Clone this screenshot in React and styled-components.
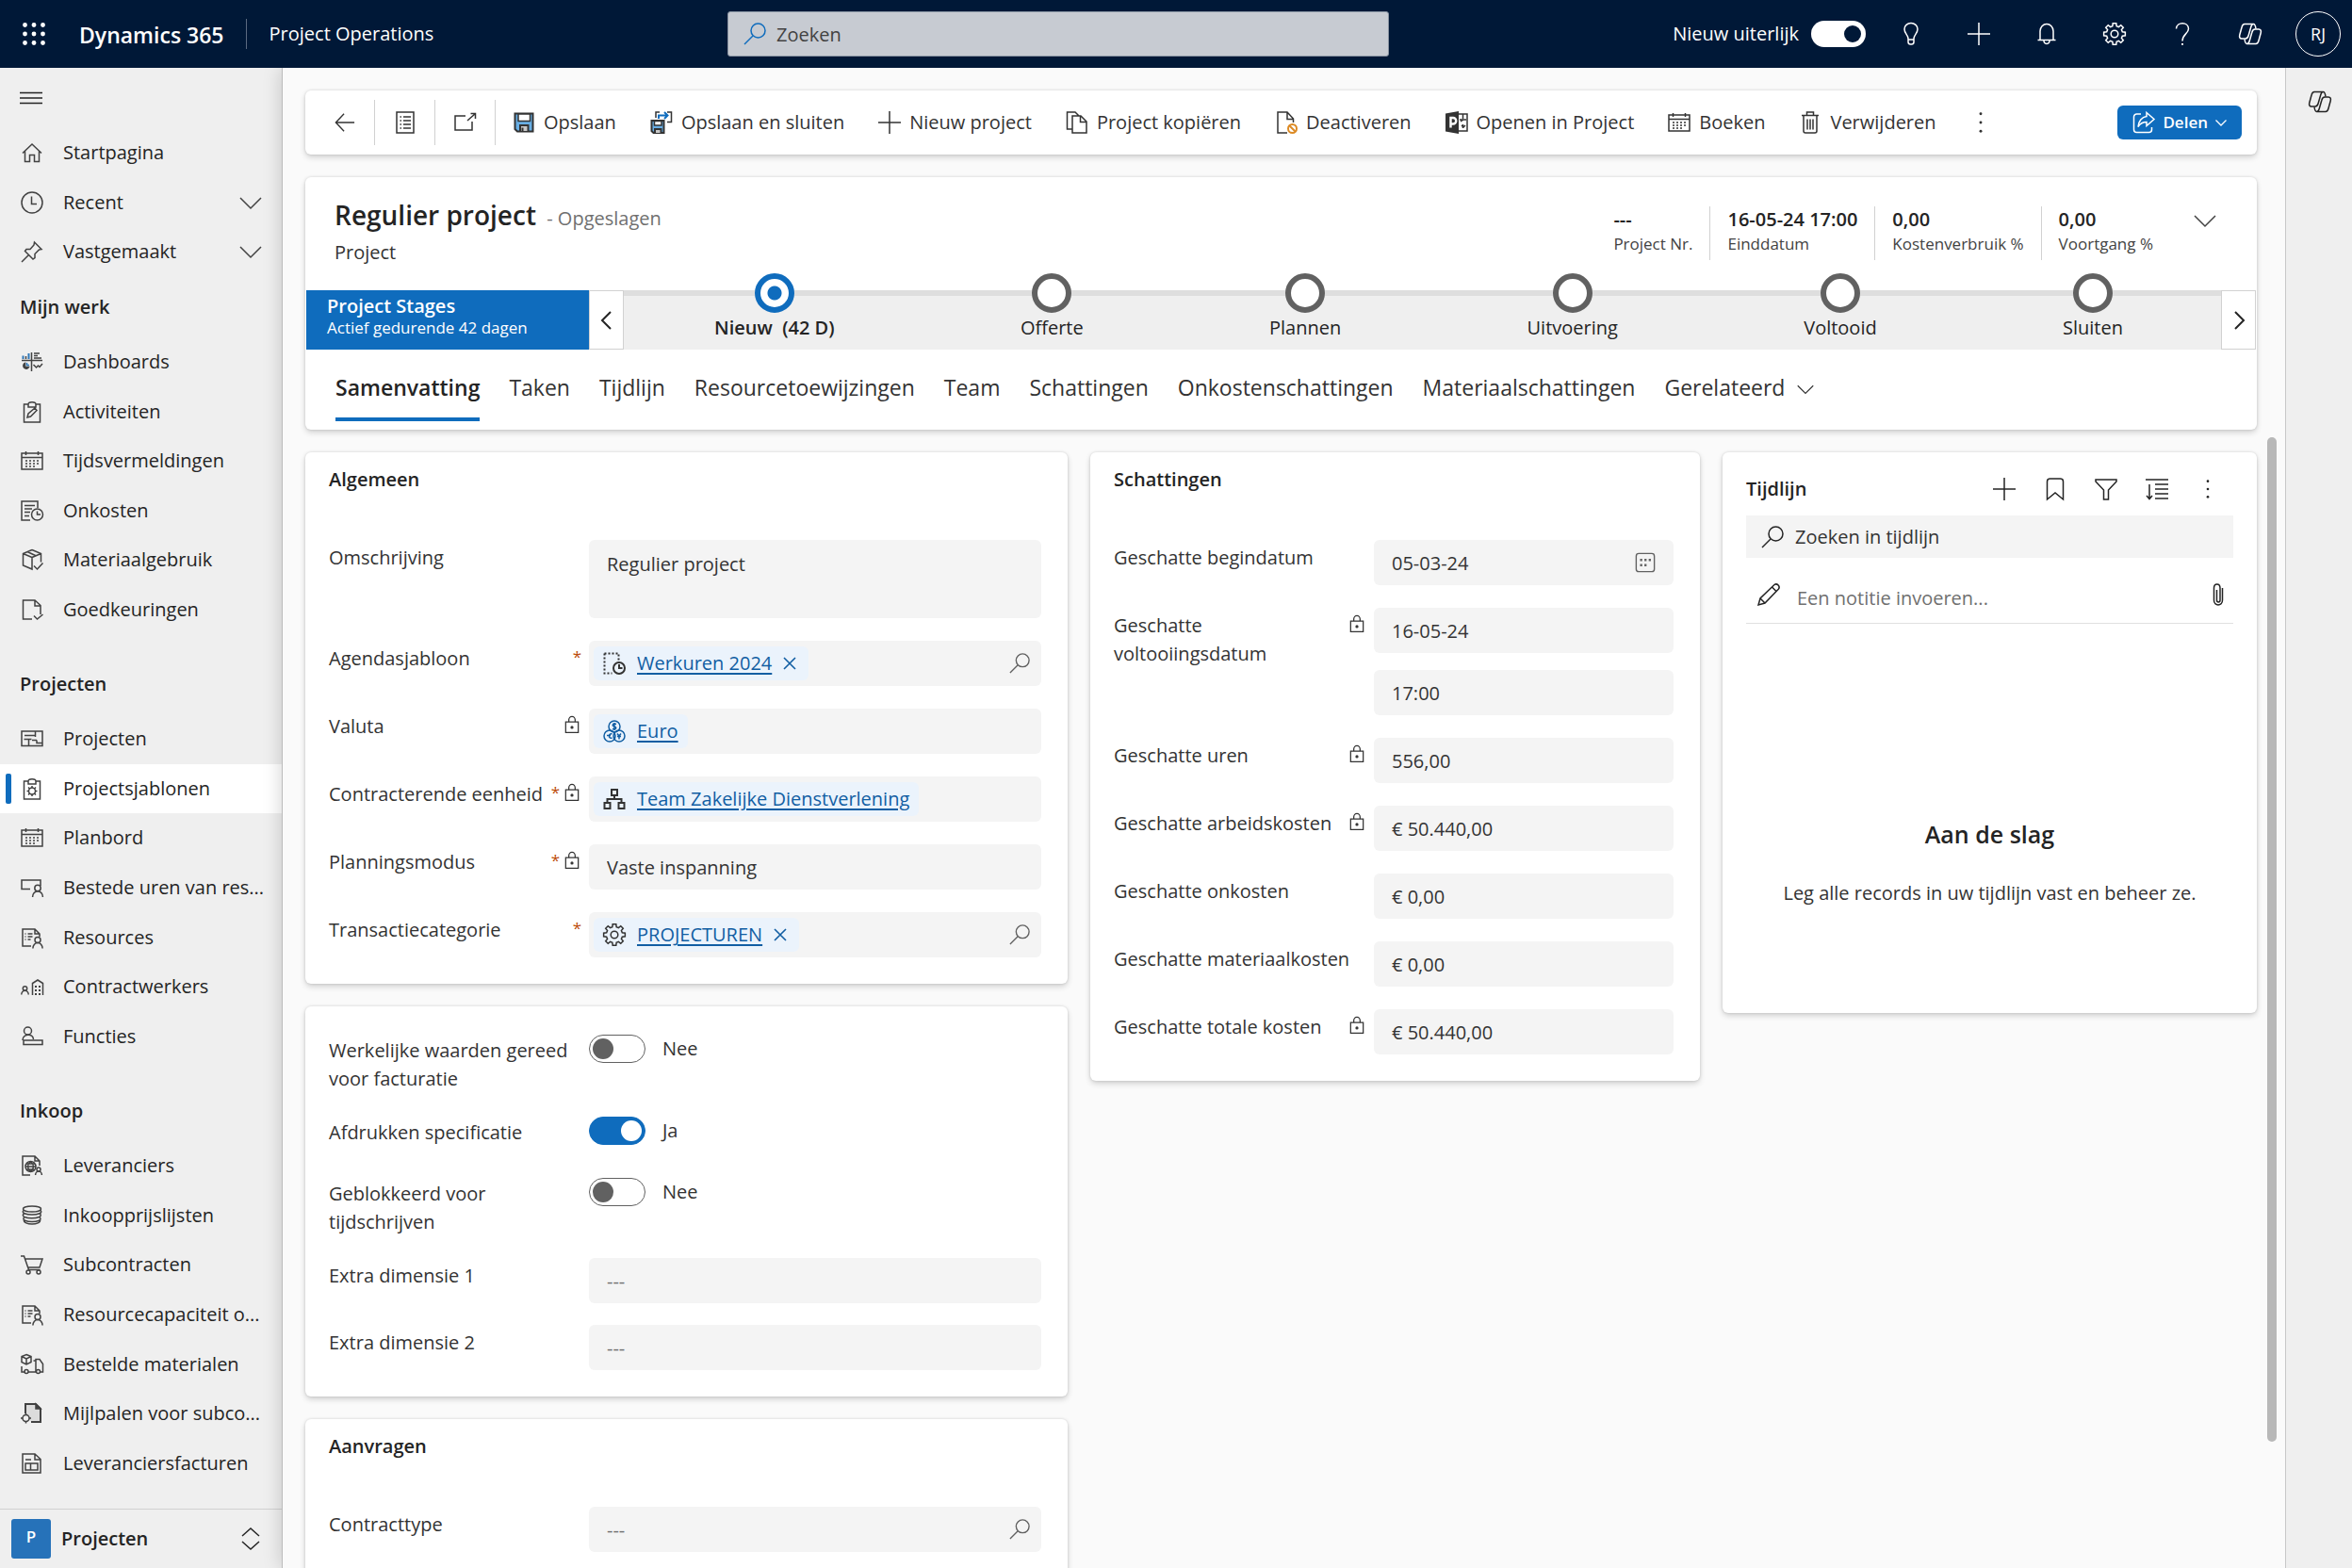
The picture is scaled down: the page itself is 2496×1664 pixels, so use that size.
import React, { useState } from 'react';
import styled, { createGlobalStyle, css } from 'styled-components';


// STYLES


const GlobalStyle = createGlobalStyle`
    *, *::before, *::after {
      box-sizing: border-box;
    }
    body {
      margin: 0;
      background-color: #fafafa;
      color: #242424;
      font-family: "Open Sans", "Noto Sans", sans-serif;
      font-size: 20px;
      line-height: 30px;
    }
    button, input, textarea, select {
      font: inherit;
      color: inherit;
      margin: 0;
      padding: 0;
      border: 0;
      background: none;
    }
    button {
      cursor: pointer;
    }
    h1, h2, h3, p, ul, dl, dd {
      margin: 0;
      padding: 0;
    }
    ul {
      list-style: none;
    }
    svg {
      display: block;
      flex-shrink: 0;
    }
`;

const AppStyled = styled.div`
    height: 100vh;
    display: grid;
    grid-template-columns: 300px minmax(0, 1fr) 71px;
    grid-template-rows: 72px minmax(0, 1fr);
    overflow: hidden;
`;

const TopBar = styled.header`
    grid-column: 1 / -1;
    display: grid;
    grid-template-columns: 772fr 702fr 1022fr;
    align-items: center;
    background-color: #001837;
    color: #ffffff;
    z-index: 3;
`;

const Brand = styled.div`
    display: flex;
    align-items: center;
`;

const WaffleButton = styled.button`
    width: 72px;
    height: 72px;
    display: grid;
    place-items: center;
`;

const BrandName = styled.a`
    padding: 2px 23px 0 12px;
    font-size: 23px;
    font-weight: 600;
    color: inherit;
    text-decoration: none;
`;

const AppName = styled.a`
    padding: 8px 24px;
    border-left: 1px solid #5b6a80;
    line-height: 16px;
    color: inherit;
    text-decoration: none;
`;

const GlobalSearch = styled.label`
    height: 48px;
    display: flex;
    align-items: center;
    gap: 11px;
    padding: 0 16px;
    border: 1px solid #8a94a2;
    border-radius: 3px;
    background-color: #c7cbd2;
    color: #0f6cbd;

    input {
      flex: 1;
      min-width: 0;
      padding-top: 2px;
      outline: none;
      color: #424242;
    }
    input::placeholder {
      color: #424242;
      opacity: 1;
    }
`;

const TopActions = styled.div`
    display: flex;
    align-items: center;
    justify-content: flex-end;
`;

const TopButton = styled.button`
    width: 72px;
    height: 72px;
    display: grid;
    place-items: center;
`;

const NewLook = styled.label`
    display: flex;
    align-items: center;
    gap: 13px;
    margin-right: 12px;
`;

const NewLookSwitch = styled.input`
    appearance: none;
    width: 58px;
    height: 28px;
    border-radius: 14px;
    background-color: #ffffff;
    display: flex;
    align-items: center;
    justify-content: ${props => props.checked ? 'flex-end' : 'flex-start'};
    padding: 0 5px;

    &::before {
      content: '';
      width: 18px;
      height: 18px;
      border-radius: 50%;
      background-color: #001837;
    }
`;

const Avatar = styled.span`
    width: 48px;
    height: 48px;
    display: grid;
    place-items: center;
    border: 1px solid #ffffff;
    border-radius: 50%;
    font-size: 18px;
`;

const SideBar = styled.aside`
    display: flex;
    flex-direction: column;
    min-height: 0;
    background-color: #efefef;
`;

const MenuButton = styled.button`
    height: 64px;
    flex-shrink: 0;
    padding-left: 21px;
    text-align: left;
`;

const Nav = styled.nav`
    flex: 1;
    min-height: 0;
    display: flex;
    flex-direction: column;
    padding-bottom: 22px;
`;

const NavHeading = styled.h2`
    flex: 0 0 64px;
    margin-top: ${props => props.$first ? '0' : '21px'};
    padding-left: 21px;
    font-size: 20px;
    font-weight: 600;
    line-height: 64px;
`;

const NavLink = styled.a`
    flex: 1 1 52px;
    min-height: 0;
    display: flex;
    align-items: center;
    padding: 0 22px 0 6px;
    background-color: ${props => props.$active ? '#ffffff' : 'transparent'};
    color: #242424;
    text-decoration: none;
    white-space: nowrap;

    &::before {
      content: '';
      flex-shrink: 0;
      width: 6px;
      height: 32px;
      margin-right: 10px;
      border-radius: 2px;
      background-color: ${props => props.$active ? '#0f6cbd' : 'transparent'};
    }
    span {
      flex: 1;
      min-width: 0;
      padding-left: 21px;
    }
    svg {
      color: #424242;
    }
`;

const AreaSwitch = styled.button`
    flex: 0 0 63px;
    display: flex;
    align-items: center;
    gap: 11px;
    padding: 0 22px 0 12px;
    border-top: 1px solid #d1d1d1;
    font-weight: 600;
    text-align: left;

    span:nth-child(2) {
      flex: 1;
    }
`;

const AreaBadge = styled.span`
    width: 42px;
    height: 42px;
    border-radius: 3px;
    background-color: #2672b9;
    color: #ffffff;
    font-size: 17px;
    line-height: 38px;
    text-align: center;
`;

const Main = styled.main`
    min-height: 0;
    display: flex;
    flex-direction: column;
    gap: 24px;
    padding: 24px 0 0 24px;
    background-color: #fafafa;
    box-shadow: -1px 0 0 #bcbcbc, 0 0 20px rgba(0, 0, 0, 0.2);
    z-index: 1;
`;

const RightRail = styled.aside`
    border-left: 1px solid #c8c8c8;
    background-color: #efefef;
    z-index: 2;
`;

const Panel = styled.section`
    background-color: #ffffff;
    border-radius: 6px;
    box-shadow: 0 0 3px rgba(0, 0, 0, 0.14), 0 3px 6px rgba(0, 0, 0, 0.16);
`;

const CommandBar = styled(Panel)`
    flex-shrink: 0;
    height: 68px;
    display: flex;
    align-items: center;
    margin-right: 30px;
    padding: 0 16px 0 10px;
    color: #333333;
`;

const IconCommand = styled.button`
    width: 64px;
    height: 48px;
    display: grid;
    place-items: center;
    border-right: 1px solid #d1d1d1;
`;

const Command = styled.button`
    display: flex;
    align-items: center;
    gap: 9px;
    padding: 0 18px;
    white-space: nowrap;
`;

const ShareButton = styled.button`
    height: 36px;
    display: flex;
    align-items: center;
    gap: 8px;
    margin-left: auto;
    padding: 0 16px;
    border-radius: 6px;
    background-color: #0f6cbd;
    color: #ffffff;
    font-size: 17px;
    font-weight: 600;
`;

const RecordHeader = styled(Panel)`
    flex-shrink: 0;
    margin-right: 30px;
`;

const RecordTop = styled.div`
    height: 120px;
    display: flex;
    justify-content: space-between;
    padding: 20px 43px 0 31px;
`;

const RecordTitle = styled.div`
    h1 {
      font-size: 28px;
      font-weight: 600;
      line-height: 40px;
    }
    h1 span {
      margin-left: 4px;
      font-size: 20px;
      font-weight: 400;
      color: #707070;
    }
    p {
      line-height: 32px;
      color: #333333;
    }
`;

const Stats = styled.dl`
    display: flex;
    align-items: flex-start;
    padding-top: 11px;
`;

const Stat = styled.div`
    height: 57px;
    display: flex;
    flex-direction: column-reverse;
    justify-content: flex-end;
    padding: 0 18px;
    border-left: ${props => props.$first ? '0' : '1px solid #d1d1d1'};

    dt {
      font-size: 17px;
      line-height: 24px;
      color: #424242;
    }
    dd {
      font-weight: 600;
      line-height: 28px;
    }
`;

const ExpandButton = styled.button`
    margin-left: 25px;
    padding-top: 3px;
    color: #424242;
`;

const ProcessFlow = styled.div`
    display: flex;
    height: 63px;
    padding: 0 1px;
`;

const ProcessName = styled.button`
    width: 300px;
    padding: 0 22px 8px;
    background-color: #0f6cbd;
    color: #ffffff;
    font-weight: 600;
    line-height: 25px;
    text-align: left;

    small {
      display: block;
      font-size: 17px;
      font-weight: 400;
      line-height: 22px;
    }
`;

const ProcessArrow = styled.button`
    width: 37px;
    display: grid;
    place-items: center;
    border: 1px solid #d1d1d1;
    background-color: #ffffff;
`;

const StageList = styled.ul`
    flex: 1;
    display: flex;
    justify-content: space-between;
    padding: 0 104px 0 96px;
    border-top: 6px solid #dedede;
    background-color: #efefef;
`;

const Stage = styled.li`
    display: flex;
    flex-direction: column;
    align-items: center;
    margin-top: -24px;
    font-weight: ${props => props.$active ? '600' : '400'};
    line-height: 32px;
    white-space: pre;

    &::before {
      content: '';
      width: 42px;
      height: 42px;
      border: 6px solid ${props => props.$active ? '#0f6cbd' : '#616161'};
      border-radius: 50%;
      background: ${props => props.$active ? 'radial-gradient(#0f6cbd 7px, #ffffff 8px)' : '#ffffff'};
    }
`;

const TabList = styled.div`
    height: 85px;
    display: flex;
    gap: 31px;
    padding: 20px 32px 0;
`;

const Tab = styled.button`
    height: 56px;
    display: flex;
    align-items: flex-start;
    gap: 13px;
    padding-top: 4px;
    font-size: 23px;
    line-height: 32px;
    color: #333333;
    white-space: nowrap;

    svg {
      margin-top: 9px;
    }

    ${props => props.$active && css`
      border-bottom: 4px solid #0f6cbd;
      color: #242424;
      font-weight: 600;
    `}
`;

const FormBody = styled.div`
    flex: 1;
    min-height: 0;
    display: flex;
    margin-right: 9px;
`;

const Columns = styled.div`
    flex: 1;
    display: grid;
    grid-template-columns: 809fr 647fr 567fr;
    align-items: start;
    gap: 24px;
`;

const Column = styled.div`
    display: grid;
    gap: 24px;
`;

const ScrollThumb = styled.div`
    width: 10px;
    height: 90%;
    margin: -16px 0 0 11px;
    border-radius: 5px;
    background-color: #b8b8b8;
`;

const FormCard = styled(Panel)`
    display: grid;
    gap: ${props => props.$untitled ? '23px' : '24px'};
    padding: ${props => props.$untitled ? '28px 28px 28px 25px' : '14px 28px 28px 25px'};
`;

const CardTitle = styled.h2`
    margin-bottom: 25px;
    font-size: 20px;
    font-weight: 600;
    line-height: 30px;
`;

const FieldRow = styled.div`
    display: grid;
    grid-template-columns: 276px minmax(0, 1fr);
`;

const FieldLabel = styled.label`
    display: flex;
    align-items: flex-start;
    gap: 3px;
    padding: 4px 8px 0 0;
    color: #333333;

    span {
      flex: 1;
    }
    em {
      color: #bc4b09;
      font-size: 17px;
      font-style: normal;
      line-height: 26px;
    }
    svg {
      margin-top: 3px;
    }
`;

const ControlStack = styled.div`
    display: grid;
    gap: 18px;
`;

const FieldBox = styled.div`
    min-height: ${props => props.$tall ? '83px' : '48px'};
    display: flex;
    align-items: center;
    padding: 0 12px 0 19px;
    border-radius: 6px;
    background-color: #f4f4f4;
    color: #333333;

    ${props => props.$lookup && css`
      padding-left: 5px;
    `}

    input, textarea, select {
      flex: 1;
      min-width: 0;
      padding-top: 2px;
      outline: none;
    }
    input::placeholder {
      color: #707070;
      opacity: 1;
    }
    select {
      appearance: none;
    }
    textarea {
      height: 66px;
      resize: none;
    }
    > button {
      margin-left: auto;
      color: #616161;
    }
`;

const DateButton = styled.button`
    margin-right: 7px;
`;

const Chip = styled.span`
    height: 36px;
    display: flex;
    align-items: center;
    padding: 0 10px;
    border-radius: 6px;
    background-color: #ebf3fc;

    a {
      margin-left: 12px;
      color: #115ea3;
      text-decoration-thickness: 2px;
      text-underline-offset: 3px;
    }
    button {
      margin: 0 2px 0 11px;
      color: #115ea3;
    }
`;

const SwitchRow = styled.div`
    min-height: 42px;
    display: flex;
    align-items: flex-start;
    gap: 18px;
    padding-top: 2px;
    color: #333333;
`;

const Switch = styled.input`
    appearance: none;
    width: 60px;
    height: 30px;
    display: flex;
    align-items: center;
    justify-content: flex-start;
    padding: 0 3px;
    border: 1px solid #616161;
    border-radius: 15px;

    &::before {
      content: '';
      width: 22px;
      height: 22px;
      border-radius: 50%;
      background-color: #616161;
    }
    &:checked {
      justify-content: flex-end;
      border-color: #0f6cbd;
      background-color: #0f6cbd;
    }
    &:checked::before {
      background-color: #ffffff;
    }
`;

const TimelineCard = styled(Panel)`
    padding: 16px 25px 112px;
`;

const TimelineHead = styled.div`
    height: 51px;
    display: flex;
    align-items: center;
    padding-bottom: 6px;

    h2 {
      flex: 1;
      font-size: 20px;
      font-weight: 600;
    }
    button {
      width: 54px;
      height: 44px;
      display: grid;
      place-items: center;
    }
`;

const TimelineSearch = styled.label`
    height: 45px;
    display: flex;
    align-items: center;
    gap: 12px;
    padding: 0 16px;
    background-color: #f4f4f4;

    input {
      flex: 1;
      min-width: 0;
      outline: none;
    }
    input::placeholder {
      color: #333333;
      opacity: 1;
    }
`;

const NoteRow = styled.label`
    height: 70px;
    display: flex;
    align-items: center;
    gap: 18px;
    padding: 8px 4px 0 12px;
    border-bottom: 1px solid #e0e0e0;

    input {
      flex: 1;
      min-width: 0;
      padding-top: 8px;
      outline: none;
    }
    input::placeholder {
      color: #707070;
      opacity: 1;
    }
`;

const EmptyState = styled.div`
    padding-top: 204px;
    text-align: center;

    h3 {
      font-size: 25px;
      font-weight: 600;
      line-height: 38px;
    }
    p {
      padding-top: 29px;
      color: #333333;
      white-space: nowrap;
    }
`;


// ICONS


const gearPath = (c, teeth, outer, inner) => {
    const step = Math.PI * 2 / teeth;
    const points = [];
    for (let i = 0; i < teeth; i++) {
        [[-0.32, inner], [-0.2, outer], [0.2, outer], [0.32, inner]].forEach(([offset, radius]) => {
            const angle = (i + offset) * step;
            points.push(`${(c + Math.sin(angle) * radius).toFixed(2)} ${(c - Math.cos(angle) * radius).toFixed(2)}`);
        });
    }
    return `M${points.join('L')}Z`;
};

const person = (x, y, r) => (
    <>
        <circle cx={x} cy={y} r={r} />
        <path d={`M${x - r * 1.7} ${y + r * 3}a${r * 1.7} ${r * 2} 0 0 1 ${r * 3.4} 0`} />
    </>
);

const calendar = (
    <>
        <path d="M1 4h22v17H1zM1 8.500h22M5.500 2v4M18.500 2v4" />
        <path d="M5 12h14.500M5 15h14.500M5 18h11" strokeDasharray="2 2" />
    </>
);

const resourceDoc = (
    <>
        <path d="M11 21H2V3h13l5 5v3M15 3v5h5M4.500 8h1M7.500 8h5M4.500 11h1M7.500 11h5M4.500 14h1M7.500 14h3" />
        {person(18, 14.5, 3)}
    </>
);

// one half of the Copilot ribbon, the other half is the same path turned around
const copilotHalf = 'M6 1.500C4 1.500 3.500 3 3 5L.8 13c-.6 2.300 0 4 2.200 4h4c2 0 2.700-1.500 3.200-3.500l2.600-9c.5-1.700 1-3 2.700-3M6 1.500h9.500c1.700 0 2 1.500 2.500 5';

const icons = {
    menu: <path d="M0 6.500h24M0 12h24M0 17.500h24" />,
    home: <path d="M2 12.500L12 3l10 9.500M4.500 10.500V21.500H9.500V14.500h5v7h5V10.500" />,
    clock: <><circle cx="12" cy="12" r="11" /><path d="M11.500 5.500v8H17" /></>,
    pin: <path d="M14.500 2l7.500 7.500-2.500.5-4.500 4.500v4l-2 1.500-8.500-8.500L6 9.500h4L14 5zM8.500 15.500L1 23" />,
    chevronDown: <path d="M1 7l11 11L23 7" />,
    chevronLeft: <path d="M16 3L7 12l9 9" strokeWidth="2" />,
    chevronRight: <path d="M8 3l9 9-9 9" strokeWidth="2" />,
    upDown: <path d="M3 9l9-8 9 8M3 15l9 8 9-8" />,
    dashboard: (
        <>
            <path d="M1 10.500h22M11.500 2v20" />
            <path d="M2.500 9V5.500M8.500 9V3" stroke="#2f78b9" strokeWidth="2" />
            <path d="M5.500 9V6M14 3h6M14 5.500h4M14 8h8" />
            <path d="M13.500 15l3 3 2-2 1.500 1.500 3-3.500" />
            <path d="M4.500 13.500v4h4a3 3 0 1 1-4-4z" fill="currentColor" />
            <path d="M6.500 13v2.500h2.500" stroke="#2f78b9" />
        </>
    ),
    clipboard: <path d="M3.500 4h4.500c0-3 8-3 8 0h4.500v19h-17zM8 4v3h8V4M7 18l1-4 7-6 2 2.500-6.500 6.500z" />,
    clipboardGear: (
        <>
            <path d="M3.500 4h4.500c0-3 8-3 8 0h4.500v19h-17zM8 4v3h8V4" />
            <circle cx="12" cy="14.500" r="3.500" />
            <path d="M12 9v2M12 18v2M6.500 14.500h2M15.500 14.500h2M8 10.500l1.500 1.500M14.500 17l1.500 1.500M16 10.500l-1.500 1.500M9.500 17L8 18.500" />
        </>
    ),
    calendar,
    expense: <><path d="M10 22H1V2h17v7M4 6.500h11M4 10h8M4 13.500h6M4 17.500h5" /><circle cx="17.500" cy="16" r="6" /><path d="M17.500 12.500V16H21" /></>,
    box: <path d="M12 1.500l9.500 4v9M12 1.500l-9.500 4v12.500L12 22V9.500L2.500 5.500M12 9.500l9.500-4M7 3.500l9.500 4.500M14 18.500l3.500 3.500 6-6.500" />,
    approval: <path d="M12 22H2.500V2H15l6 5.500V17M15 2v6h6M14 18.500l3.500 3.500 6-5" />,
    board: <path d="M1 4h22v15.500H1zM4 8.500h7M3.500 12.500h8M8.500 12.500v7M15.500 4v6M11 8.500h4.500M12 13.500h5M17 13.500v3h6" />,
    booked: <><path d="M10 13.500H1V4h20v6" />{person(18, 12.5, 3.2)}</>,
    resourceDoc,
    contractors: (
        <>
            {person(4.5, 14, 2.2)}
            <path d="M12.500 21V8.500L18 5l5.500 3.500V21" />
            <path d="M16 11v10M20 11v10" strokeDasharray="2 2" strokeWidth="2" />
        </>
    ),
    roles: <><circle cx="7.500" cy="6" r="4" /><path d="M2 16c0-7 11-8 11.500-1M3 16h20v4.500H3z" /></>,
    vendors: <><path d="M10 22H2V2h13l5 5v5M15 2v5h5" /><circle cx="10.500" cy="13" r="5.500" /><path d="M5 13h11M6 10h9M6 16h8M10.500 7.500c-4 4-4 7 0 11M10.500 7.500c4 4 4 7 0 11" />{person(19, 16, 2)}</>,
    coins: (
        <>
            <ellipse cx="12" cy="5" rx="9.500" ry="3" />
            <path d="M3 6.500c-1.500 1.500-.5 2.500 1 3.200 4 1.800 12 1.800 16 0 1.500-.7 2.500-1.700 1-3.200M4 9.700c-2.500 1.500-2 2.800 0 3.800 4 1.800 11.500 1.800 15.500 0 2-1 2.500-2.300.5-3.800M4 13.500c-1.500 1.500-1.500 2.800.5 3.700 4 1.800 11 1.800 15 0 2-.9 2-2.200 0-3.700M3.500 16.500c-1.500 6 18.500 6 17 0" />
        </>
    ),
    cart: <><path d="M0 3h3.500l5 14.500h12M4.500 6h18.500l-3 9H7.500" /><circle cx="8" cy="20" r="2" /><circle cx="19" cy="20" r="2" /></>,
    truck: <><path d="M6 1.500l5 2v6l-5 2.500-5-2.500v-6zM1 3.500l5 2.500 5-2.500M6 6v5M1 14v6h3.500M8 20h8M13.500 8H16M16 20V6.500h4l3.500 5V20H21" /><circle cx="6" cy="19.500" r="2" /><circle cx="18.500" cy="19.500" r="2" /></>,
    milestone: <><path d="M5 12V2h11l5 5v14H11" fill="#dcdcdc" strokeWidth="2" /><path d="M16 2v5h5z" fill="currentColor" /><circle cx="5.500" cy="17" r="3.500" fill="#efefef" /><path d="M5.500 12v2M5.500 20v2.500M0 17h2M9 17h2" /></>,
    invoice: <path d="M2 2h13l6 5.500V22H2zM15 2v6h6M5 8h6M5 12h13v7H5zM10.500 12v7M5 12h13" />,
    search: <><circle cx="15.500" cy="8.500" r="7.500" /><path d="M10 14l-9 9" /></>,
    waffle: (
        <g fill="currentColor" stroke="none">
            {[2.5, 12, 21.5].map(x => [2.5, 12, 21.5].map(y => <circle key={`${x}-${y}`} cx={x} cy={y} r="2.4" />))}
        </g>
    ),
    bulb: <path d="M9 17c0-4-4-5.500-4-10a7 6.500 0 0 1 14 0c0 4.500-4 6-4 10v3.500a2.500 2.500 0 0 1-2.500 2.500h-1a2.500 2.500 0 0 1-2.500-2.500zM9 18h6" />,
    plus: <path d="M12 0v24M0 12h24" />,
    bell: <path d="M5 18.500V9a7 7.500 0 0 1 14 0v9.500M2.500 18.500h19M9 19c0 4.500 6 4.500 6 0" />,
    gear: <><path d={gearPath(12, 8, 11.5, 8.6)} /><circle cx="12" cy="12" r="3.800" /></>,
    help: <><path d="M5.500 6.500C6-1.500 18.500-1 18.500 6.500c0 5.500-6.500 5.500-6.500 13" /><path d="M12 22v1.700" strokeWidth="2" /></>,
    copilot: <><path d={copilotHalf} /><path d={copilotHalf} transform="rotate(180 12 12)" /></>,
    back: <path d="M23 12H1.500M11 2L1.500 12 11 22" />,
    form: <path d="M3 1h18v22H3zM6.500 6h1.500M10 6h8M6.500 10h1.500M10 10h8M6.500 14h1.500M10 14h8M6.500 18h1.500M10 18h8" />,
    popout: <path d="M12 5H1v15h18V11M14 10l8.500-7.500M17.500 2.500h5V8" />,
    save: (
        <>
            <path d="M2.500 2.500h19v19H5l-2.500-2.500z" fill="#69afe5" strokeWidth="2" />
            <path d="M6 3h12.500v7.500H6z" fill="#ffffff" />
            <path d="M8 21v-6h8.500v6" fill="#c8c8c8" strokeWidth="2" />
            <path d="M10.500 17.500v4" strokeWidth="2" />
        </>
    ),
    saveClose: (
        <>
            <path d="M1.500 10h13v13h-11l-2-2z" fill="#69afe5" strokeWidth="2" />
            <path d="M4.500 10.500h7.500v4.500H4.500z" fill="#ffffff" />
            <path d="M5 23v-4h6.500v4" fill="#c8c8c8" strokeWidth="2" />
            <path d="M6 7V1h4M18 1h4.500v10.500H18" />
            <path d="M9 8V4.500h9M15 1l3.500 3.500L15 8" stroke="#0f6cbd" strokeWidth="2" />
        </>
    ),
    copy: <path d="M7 19H1.500V1h8.500l4 4M7 5h9l6 6v12H7zM15.500 5v6.500H22" />,
    deactivate: <><path d="M13 23H3V1h10l6.500 7v4M13 1v7.500h6" /><g stroke="#dc8a24" strokeWidth="2"><circle cx="18.500" cy="18.500" r="4.500" /><path d="M15.500 15.500l6 6" /></g></>,
    project: (
        <>
            <path d="M14 3h9v18h-9" />
            <path d="M18.500 3v5M15 9h7M18.500 14v4M16 11l3-2M17 15l2 2 2-2" />
            <path d="M0 2.500L14 0v24L0 21.500z" fill="currentColor" stroke="none" />
            <path d="M5.500 17.500V7H8a3 3 0 0 1 0 6.500H5.500" stroke="#ffffff" strokeWidth="2.400" />
        </>
    ),
    trash: <path d="M3 4.500h18M8.500 4V1h7v3M5 4.500V21c0 1.500.5 2 2 2h10c1.500 0 2-.5 2-2V4.500M9 8.500v11M12 8.500v11M15 8.500v11" />,
    more: <g fill="currentColor" stroke="none"><circle cx="12" cy="2" r="1.600" /><circle cx="12" cy="12" r="1.600" /><circle cx="12" cy="22" r="1.600" /></g>,
    share: <path d="M9 3H4.500A3 3 0 0 0 1.500 6v13.500a3 3 0 0 0 3 3h13a3 3 0 0 0 3-3V17M15 1.500l8 7-8 7v-4c-4 0-6.500 1-9 5 .5-6 4-10.500 9-11z" />,
    lock: <><path d="M4 8.500h16v13.500H4zM8 8.500V6a4 4.500 0 0 1 8 0v2.500" /><circle cx="12" cy="15.500" r="1.200" fill="currentColor" /></>,
    template: <><path d="M1.500 1.500h15v10M1.500 1.500v21h8" strokeDasharray="2 2" strokeWidth="2" /><circle cx="17" cy="17" r="6" strokeWidth="2" /><path d="M17 13v4h3.500" strokeWidth="2" /></>,
    currency: (
        <g stroke="#115ea3">
            <circle cx="12" cy="7" r="6" />
            <circle cx="7" cy="17" r="6" />
            <circle cx="17" cy="17" r="6" />
            <path d="M14 4.500c-4-1.500-5 2-2 2.500s2 4-2 2.500M12 3v8M9.500 15c-3.500-1.500-4.500 5.500 0 4M4 16.500h4M15 14.500l2 2.500 2-2.500M17 17v3.500M15 17.500h4" />
        </g>
    ),
    org: <path d="M9 2h6v6H9zM1.500 16h6v6h-6zM16.500 16h6v6h-6zM12 8v4M4.500 16v-4h15v4" strokeWidth="2" />,
    close: <path d="M3 3l18 18M21 3L3 21" strokeWidth="2.400" />,
    date: <><rect x="1.500" y="1.500" width="21" height="21" rx="3" /><path d="M6 9h2.500M11 9h2.500M16 9h2.500M6 15h2.500M11 15h2.500" strokeWidth="2.500" /></>,
    bookmark: <path d="M3.500 23V4a3 3 0 0 1 3-3h11a3 3 0 0 1 3 3v19L12 16z" />,
    filter: <path d="M1 2h22v2l-8.500 9v10h-5V13L1 4z" />,
    sort: <path d="M0 2h24M10 7h14M10 12h14M10 17h14M10 22h14M4 7v15M1 19l3 3.500L7 19" />,
    pencil: <path d="M1 23l2-7L18 1.500c3-2 6.500 2 4.500 4.500L8 21zM15.500 4l4.500 4.500M3 16l5 5" />,
    clip: <path d="M16.500 7v11c0 6.500-9 6.500-9 0V5c0-5.500 6.500-5.500 6.500 0v13c0 2.500-3.500 2.500-3.500 0V7M16.500 7V5" />,
};

const Icon = ({ name, size = 24, strokeWidth = 1.5 }) => (
    <svg width={size} height={size} viewBox="0 0 24 24" fill="none" stroke="currentColor" strokeWidth={strokeWidth} overflow="visible" aria-hidden="true">
        {icons[name]}
    </svg>
);


// DATA


const navTop = [
    ['home', 'Startpagina'],
    ['clock', 'Recent', true],
    ['pin', 'Vastgemaakt', true],
];

const navGroups = [
    {
        title: 'Mijn werk',
        links: [
            ['dashboard', 'Dashboards'],
            ['clipboard', 'Activiteiten'],
            ['calendar', 'Tijdsvermeldingen'],
            ['expense', 'Onkosten'],
            ['box', 'Materiaalgebruik'],
            ['approval', 'Goedkeuringen'],
        ],
    },
    {
        title: 'Projecten',
        links: [
            ['board', 'Projecten'],
            ['clipboardGear', 'Projectsjablonen'],
            ['calendar', 'Planbord'],
            ['booked', 'Bestede uren van res...'],
            ['resourceDoc', 'Resources'],
            ['contractors', 'Contractwerkers'],
            ['roles', 'Functies'],
        ],
    },
    {
        title: 'Inkoop',
        links: [
            ['vendors', 'Leveranciers'],
            ['coins', 'Inkoopprijslijsten'],
            ['cart', 'Subcontracten'],
            ['resourceDoc', 'Resourcecapaciteit o...'],
            ['truck', 'Bestelde materialen'],
            ['milestone', 'Mijlpalen voor subco...'],
            ['invoice', 'Leveranciersfacturen'],
        ],
    },
];

const commands = [
    ['save', 'Opslaan'],
    ['saveClose', 'Opslaan en sluiten'],
    ['plus', 'Nieuw project'],
    ['copy', 'Project kopiëren'],
    ['deactivate', 'Deactiveren'],
    ['project', 'Openen in Project'],
    ['calendar', 'Boeken'],
    ['trash', 'Verwijderen'],
];

const stats = [
    ['Project Nr.', '---'],
    ['Einddatum', '16-05-24 17:00'],
    ['Kostenverbruik %', '0,00'],
    ['Voortgang %', '0,00'],
];

const stages = ['Nieuw  (42 D)', 'Offerte', 'Plannen', 'Uitvoering', 'Voltooid', 'Sluiten'];

const tabs = ['Samenvatting', 'Taken', 'Tijdlijn', 'Resourcetoewijzingen', 'Team', 'Schattingen', 'Onkostenschattingen', 'Materiaalschattingen'];

const estimates = [
    { id: 'uren', label: 'Geschatte uren', value: '556,00', locked: true },
    { id: 'arbeid', label: 'Geschatte arbeidskosten', value: '€ 50.440,00', locked: true },
    { id: 'onkosten', label: 'Geschatte onkosten', value: '€ 0,00' },
    { id: 'materiaal', label: 'Geschatte materiaalkosten', value: '€ 0,00' },
    { id: 'totaal', label: 'Geschatte totale kosten', value: '€ 50.440,00', locked: true },
];


// COMPONENTS


const Field = ({ id, label, required, locked, children }) => (
    <FieldRow>
        <FieldLabel htmlFor={id}>
            <span>{label}</span>
            {required && <em>*</em>}
            {locked && <Icon name="lock" size={20} />}
        </FieldLabel>
        {children}
    </FieldRow>
);

const Lookup = ({ id, label, icon, value, required, locked, clearable }) => (
    <Field id={id} label={label} required={required} locked={locked}>
        <FieldBox $lookup={Boolean(value)}>
            {value ?
                <Chip>
                    <Icon name={icon} />
                    <a id={id} href="#0">{value}</a>
                    {clearable && <button aria-label={`${value} verwijderen`}><Icon name="close" size={16} /></button>}
                </Chip> :
                <input id={id} placeholder="---" />
            }
            {!locked && <button aria-label={`${label} zoeken`}><Icon name="search" size={22} /></button>}
        </FieldBox>
    </Field>
);

const ToggleField = ({ id, label, initial }) => {
    const [on, setOn] = useState(initial);
    return (
        <Field id={id} label={label}>
            <SwitchRow>
                <Switch id={id} type="checkbox" role="switch" checked={on} onChange={() => setOn(!on)} />
                <span>{on ? 'Ja' : 'Nee'}</span>
            </SwitchRow>
        </Field>
    );
};

const Header = () => {
    const [newLook, setNewLook] = useState(true);
    return (
        <TopBar>
            <Brand>
                <WaffleButton aria-label="Apps"><Icon name="waffle" /></WaffleButton>
                <BrandName href="#0">Dynamics 365</BrandName>
                <AppName href="#0">Project Operations</AppName>
            </Brand>
            <GlobalSearch>
                <Icon name="search" />
                <input type="text" placeholder="Zoeken" aria-label="Zoeken" />
            </GlobalSearch>
            <TopActions>
                <NewLook>
                    Nieuw uiterlijk
                    <NewLookSwitch type="checkbox" role="switch" checked={newLook} onChange={() => setNewLook(!newLook)} />
                </NewLook>
                {['bulb', 'plus', 'bell', 'gear', 'help', 'copilot'].map(name => (
                    <TopButton key={name} aria-label={name}><Icon name={name} /></TopButton>
                ))}
                <TopButton><Avatar>RJ</Avatar></TopButton>
            </TopActions>
        </TopBar>
    );
};

const Navigation = () => (
    <SideBar>
        <MenuButton aria-label="Menu"><Icon name="menu" /></MenuButton>
        <Nav>
            {navTop.map(([icon, label, expandable]) => (
                <NavLink key={label} href="#0">
                    <Icon name={icon} />
                    <span>{label}</span>
                    {expandable && <Icon name="chevronDown" />}
                </NavLink>
            ))}
            {navGroups.map((group, index) => (
                <React.Fragment key={group.title}>
                    <NavHeading $first={index === 0}>{group.title}</NavHeading>
                    {group.links.map(([icon, label]) => (
                        <NavLink key={label} href="#0" $active={label === 'Projectsjablonen'}>
                            <Icon name={icon} />
                            <span>{label}</span>
                        </NavLink>
                    ))}
                </React.Fragment>
            ))}
        </Nav>
        <AreaSwitch>
            <AreaBadge>P</AreaBadge>
            <span>Projecten</span>
            <Icon name="upDown" />
        </AreaSwitch>
    </SideBar>
);

const Commands = () => (
    <CommandBar>
        <IconCommand aria-label="Terug"><Icon name="back" size={22} /></IconCommand>
        <IconCommand aria-label="Formulier"><Icon name="form" /></IconCommand>
        <IconCommand aria-label="Openen in nieuw venster"><Icon name="popout" /></IconCommand>
        {commands.map(([icon, label]) => (
            <Command key={label}>
                <Icon name={icon} />
                {label}
            </Command>
        ))}
        <Command aria-label="Meer"><Icon name="more" size={22} /></Command>
        <ShareButton>
            <Icon name="share" />
            Delen
            <Icon name="chevronDown" size={12} strokeWidth={2.5} />
        </ShareButton>
    </CommandBar>
);

const Record = () => {
    const [tab, setTab] = useState('Samenvatting');
    return (
        <RecordHeader>
            <RecordTop>
                <RecordTitle>
                    <h1>Regulier project <span>- Opgeslagen</span></h1>
                    <p>Project</p>
                </RecordTitle>
                <Stats>
                    {stats.map(([name, value], index) => (
                        <Stat key={name} $first={index === 0}>
                            <dt>{name}</dt>
                            <dd>{value}</dd>
                        </Stat>
                    ))}
                    <ExpandButton aria-label="Meer tonen"><Icon name="chevronDown" /></ExpandButton>
                </Stats>
            </RecordTop>
            <ProcessFlow>
                <ProcessName>
                    Project Stages
                    <small>Actief gedurende 42 dagen</small>
                </ProcessName>
                <ProcessArrow aria-label="Vorige"><Icon name="chevronLeft" /></ProcessArrow>
                <StageList>
                    {stages.map((stage, index) => <Stage key={stage} $active={index === 0}>{stage}</Stage>)}
                </StageList>
                <ProcessArrow aria-label="Volgende"><Icon name="chevronRight" /></ProcessArrow>
            </ProcessFlow>
            <TabList role="tablist">
                {tabs.map(name => (
                    <Tab key={name} role="tab" aria-selected={name === tab} $active={name === tab} onClick={() => setTab(name)}>{name}</Tab>
                ))}
                <Tab>Gerelateerd <Icon name="chevronDown" size={18} /></Tab>
            </TabList>
        </RecordHeader>
    );
};

const General = () => (
    <Column>
        <FormCard>
            <CardTitle>Algemeen</CardTitle>
            <Field id="omschrijving" label="Omschrijving">
                <FieldBox $tall>
                    <textarea id="omschrijving" defaultValue="Regulier project" />
                </FieldBox>
            </Field>
            <Lookup id="agenda" label="Agendasjabloon" icon="template" value="Werkuren 2024" required clearable />
            <Lookup id="valuta" label="Valuta" icon="currency" value="Euro" locked />
            <Lookup id="eenheid" label="Contracterende eenheid" icon="org" value="Team Zakelijke Dienstverlening" required locked />
            <Field id="modus" label="Planningsmodus" required locked>
                <FieldBox>
                    <select id="modus"><option>Vaste inspanning</option></select>
                </FieldBox>
            </Field>
            <Lookup id="categorie" label="Transactiecategorie" icon="gear" value="PROJECTUREN" required clearable />
        </FormCard>
        <FormCard $untitled>
            <ToggleField id="facturatie" label="Werkelijke waarden gereed voor facturatie" initial={false} />
            <ToggleField id="specificatie" label="Afdrukken specificatie" initial={true} />
            <ToggleField id="geblokkeerd" label="Geblokkeerd voor tijdschrijven" initial={false} />
            {['Extra dimensie 1', 'Extra dimensie 2'].map(label => (
                <Field key={label} id={label} label={label}>
                    <FieldBox><input id={label} placeholder="---" /></FieldBox>
                </Field>
            ))}
        </FormCard>
        <FormCard>
            <CardTitle>Aanvragen</CardTitle>
            <Lookup id="contracttype" label="Contracttype" />
        </FormCard>
    </Column>
);

const Estimates = () => (
    <FormCard>
        <CardTitle>Schattingen</CardTitle>
        <Field id="begin" label="Geschatte begindatum">
            <FieldBox>
                <input id="begin" defaultValue="05-03-24" />
                <DateButton aria-label="Datum kiezen"><Icon name="date" size={22} /></DateButton>
            </FieldBox>
        </Field>
        <Field id="eind" label="Geschatte voltooiingsdatum" locked>
            <ControlStack>
                <FieldBox><input id="eind" defaultValue="16-05-24" readOnly /></FieldBox>
                <FieldBox><input aria-label="Tijd" defaultValue="17:00" readOnly /></FieldBox>
            </ControlStack>
        </Field>
        {estimates.map(({ id, label, value, locked }) => (
            <Field key={id} id={id} label={label} locked={locked}>
                <FieldBox><input id={id} defaultValue={value} readOnly /></FieldBox>
            </Field>
        ))}
    </FormCard>
);

const Timeline = () => (
    <TimelineCard>
        <TimelineHead>
            <h2>Tijdlijn</h2>
            {['plus', 'bookmark', 'filter', 'sort', 'more'].map(name => (
                <button key={name} aria-label={name}><Icon name={name} size={name === 'more' ? 20 : 24} /></button>
            ))}
        </TimelineHead>
        <TimelineSearch>
            <Icon name="search" />
            <input type="text" placeholder="Zoeken in tijdlijn" aria-label="Zoeken in tijdlijn" />
        </TimelineSearch>
        <NoteRow>
            <Icon name="pencil" />
            <input type="text" placeholder="Een notitie invoeren..." aria-label="Een notitie invoeren" />
            <Icon name="clip" />
        </NoteRow>
        <EmptyState>
            <h3>Aan de slag</h3>
            <p>Leg alle records in uw tijdlijn vast en beheer ze.</p>
        </EmptyState>
    </TimelineCard>
);

const App = () => (
    <>
        <GlobalStyle />
        <AppStyled>
            <Header />
            <Navigation />
            <Main>
                <Commands />
                <Record />
                <FormBody>
                    <Columns>
                        <General />
                        <Estimates />
                        <Timeline />
                    </Columns>
                    <ScrollThumb />
                </FormBody>
            </Main>
            <RightRail>
                <TopButton aria-label="Copilot"><Icon name="copilot" /></TopButton>
            </RightRail>
        </AppStyled>
    </>
);

export default App;
